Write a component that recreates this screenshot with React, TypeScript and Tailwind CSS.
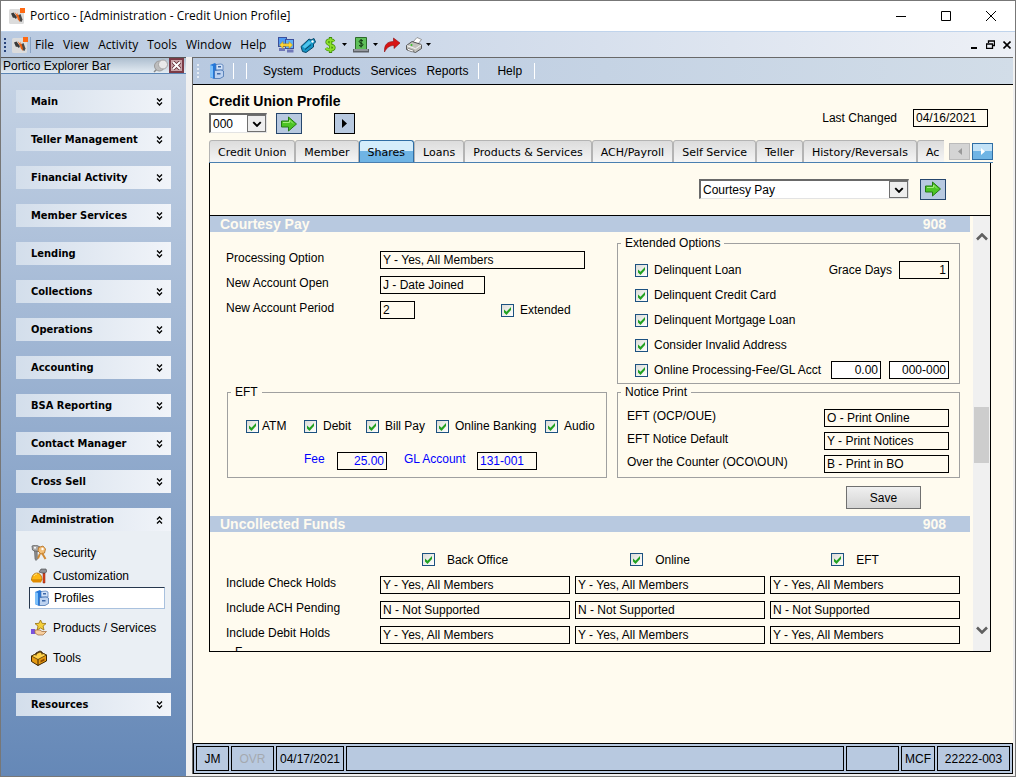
import { Fragment, useId, type ReactNode } from 'react';

const sections = [
  'Main',
  'Teller Management',
  'Financial Activity',
  'Member Services',
  'Lending',
  'Collections',
  'Operations',
  'Accounting',
  'BSA Reporting',
  'Contact Manager',
  'Cross Sell',
];

const tabs = [
  'Credit Union',
  'Member',
  'Shares',
  'Loans',
  'Products & Services',
  'ACH/Payroll',
  'Self Service',
  'Teller',
  'History/Reversals',
  'Ac',
];

const extendedOptions = [
  'Delinquent Loan',
  'Delinquent Credit Card',
  'Delinquent Mortgage Loan',
  'Consider Invalid Address',
];

const notices = [
  { label: 'EFT (OCP/OUE)', value: 'O - Print Online' },
  { label: 'EFT Notice Default', value: 'Y - Print Notices' },
  { label: 'Over the Counter (OCO\\OUN)', value: 'B - Print in BO' },
];

const holds = [
  { label: 'Include Check Holds', value: 'Y - Yes, All Members' },
  { label: 'Include ACH Pending', value: 'N - Not Supported' },
  { label: 'Include Debit Holds', value: 'Y - Yes, All Members' },
];

/* ---------- icons ---------- */

function PorticoLogo({ className = '' }: { className?: string }) {
  return (
    <svg viewBox="0 0 16 16" className={`size-4 shrink-0 ${className}`}>
      <rect y="1" width="15" height="15" rx="1.500" fill="#dcdcdc" />
      <path d="M2 5.500l2.500-1L8 9l-1 2-2-1.500-1 .5z" fill="#3a3a3a" />
      <path d="M9 7.500l2.500-1.500 2 5.500-1 2.500-2-1-1.500-2z" fill="#4a4a4a" />
      <path d="M5.500 4l3 3V4.500l2 5.500.500 4-2.500-3v-1z" fill="#f0600f" />
      <rect x="11" width="5" height="5" fill="#ff6a13" />
    </svg>
  );
}

function CabinetIcon() {
  return (
    <svg viewBox="0 0 16 16" className="size-4 shrink-0">
      <path d="M1 2l5-2 2 2v12l-3 2-4-2z" fill="#2477d8" />
      <path d="M1 2l3 1v12l-3-1z" fill="#7dc0fa" />
      <path d="M7 1.500L12 1l2 1v5H7z" fill="#d3e3f8" stroke="#4874b4" strokeWidth=".7" />
      <path d="M5.500 7.500L12 7l2.500 1v5.500L11 15.500H5.500z" fill="#bcd2f0" stroke="#3566a8" strokeWidth=".7" />
      <path d="M9 3h3v1.500H9zM8 10h3.500v1.500H8z" fill="#3d68a8" />
    </svg>
  );
}

function ComputersIcon() {
  return (
    <svg viewBox="0 0 16 16" className="size-4">
      <rect x="0.500" y="0.500" width="8" height="9" fill="#4f9af2" stroke="#3b4f9c" />
      <rect x="7.500" y="2.500" width="8" height="9" fill="#5fb0f8" stroke="#3b4f9c" />
      <path d="M1 11h6v3H1zM9 12.500h6.500v3H9z" fill="#7078b8" />
      <path d="M1.500 8l3.500-3.500v2.300h6V4.500L14.500 8 11 11.500V9.200H5v2.300z" fill="#ffd83a" stroke="#b48a00" strokeWidth=".5" />
    </svg>
  );
}

function TagIcon() {
  return (
    <svg viewBox="0 0 16 16" className="size-4">
      <path d="M1 9.500L9 2l2 1 3-1.500L15.500 5l-2 2v3l-7.500 5.500-3.500-1z" fill="#1593c4" stroke="#064668" />
      <path d="M2.500 9.500L9 3.800l2.500 2L5 11.500z" fill="#4fc4ec" />
      <circle cx="12.500" cy="4.500" r="1.200" fill="#fff" />
      <path d="M5 12.500l6-4.800" stroke="#064668" />
    </svg>
  );
}

function DollarIcon() {
  return (
    <svg viewBox="0 0 16 16" className="size-4">
      <path d="M12 4.500C10 2 5 2.500 5 5.200c0 3 7 2.300 7 5.300 0 3-6 3.300-8 .6M8.500 0v16" fill="none" stroke="#3c8a0a" strokeWidth="3.200" />
      <path d="M12 4.500C10 2 5 2.500 5 5.200c0 3 7 2.300 7 5.300 0 3-6 3.300-8 .6M8.500 1v14" fill="none" stroke="#8be02a" strokeWidth="1.800" />
    </svg>
  );
}

function CashIcon() {
  return (
    <svg viewBox="0 0 16 16" className="size-4">
      <path d="M2.500.5h11v12h-11z" fill="#5fc05a" stroke="#2c6b2a" />
      <path d="M0 12h16v3.500H0z" fill="#5c6066" />
      <path d="M1 13h14" stroke="#c9cdd4" />
      <path d="M10 4C9 2.800 6.200 3 6.200 4.600S10 6 10 7.700 7 9.500 6 8.300M8.100 2v8.500" fill="none" stroke="#0e2f0e" />
    </svg>
  );
}

function RedArrowIcon() {
  return (
    <svg viewBox="0 0 16 16" className="size-4">
      <path d="M.5 15C0 8 3 4.500 9.500 4.500V1L16 6l-6 5.500V8.500C6 8.500 3 10 .5 15z" fill="#d81414" stroke="#8d0d0d" strokeWidth=".6" />
    </svg>
  );
}

function PrinterIcon() {
  return (
    <svg viewBox="0 0 16 16" className="size-4">
      <path d="M7 5l4-4.500 4.500 2L12 7z" fill="#fff" stroke="#777" strokeWidth=".7" />
      <path d="M.5 8.500L6 4.500l9.500 3v4l-6 4-9-3z" fill="#c2c2bc" stroke="#3b3b3b" strokeWidth=".8" />
      <path d="M1 8.700l8.500 3 6-4" fill="none" stroke="#f6f6f6" />
      <path d="M2.500 11.500l5.500 2-1.500 1.500-5.500-2z" fill="#fff" stroke="#555" strokeWidth=".6" />
      <circle cx="5.500" cy="8" r="1" fill="#38c428" />
    </svg>
  );
}

function KeysIcon() {
  return (
    <svg viewBox="0 0 16 16" className="size-4">
      <path d="M1 1l4-1 4 2v4L5.500 7 1.500 5z" fill="#a9a9a9" stroke="#5e5e5e" strokeWidth=".8" />
      <path d="M3.500 6h2.500l.5 8-1.500 1.500L4 14z" fill="#8c8c8c" stroke="#555" strokeWidth=".6" />
      <circle cx="4" cy="2.800" r="1" fill="#fff" />
      <path d="M7.500 2.500L12 1l2.500 3-1 4-3.500 1-3-3z" fill="#f3bf78" stroke="#b06a1a" strokeWidth=".8" />
      <path d="M11 8l3.500 6M9 8.500l-2 5" stroke="#d08a34" strokeWidth="2" />
      <circle cx="11.500" cy="4" r="1.200" fill="#fff" />
    </svg>
  );
}

function HelmetIcon() {
  return (
    <svg viewBox="0 0 16 16" className="size-4">
      <path d="M.5 12c0-4 2.500-7 5.500-7s5 3 5 7z" fill="#fdb713" stroke="#a25f00" strokeWidth=".7" />
      <path d="M0 12h11l-1 2.500H2z" fill="#e08b00" />
      <path d="M3 8c.5-1.500 1.500-2 3-2" fill="none" stroke="#ffe88a" />
      <path d="M12 5h2v10h-2z" fill="#e2471f" stroke="#7c1d08" strokeWidth=".5" />
      <path d="M8 4l2-3h5l1 2.500-2 1.500h-3z" fill="#8d9096" stroke="#414141" strokeWidth=".6" />
    </svg>
  );
}

function StarHandIcon() {
  return (
    <svg viewBox="0 0 16 16" className="size-4">
      <path d="M9.500 0l1.600 3.300 3.900.3-2.900 2.500.9 3.900-3.500-2-3.400 2 .9-3.900L4 3.600l3.900-.3z" fill="#f4cf3a" stroke="#97700c" strokeWidth=".8" />
      <rect y="9" width="4" height="5" fill="#7a52dd" />
      <path d="M4 10h5l2 1.500h4.500L12 15H7l-3-2z" fill="#f7cf9f" stroke="#9c6431" strokeWidth=".7" />
    </svg>
  );
}

function ToolboxIcon() {
  return (
    <svg viewBox="0 0 16 16" className="size-4">
      <path d="M.5 6L9 2l6.500 3v6L7 15.500l-6.500-4z" fill="#e59a12" stroke="#3e2500" />
      <path d="M.5 6L9 2l6.500 3L7 9.500z" fill="#ffd24a" stroke="#3e2500" strokeWidth=".7" />
      <path d="M7 9.500v6" stroke="#3e2500" />
      <path d="M5 5.500V3l4-2 2 1v2.500" fill="none" stroke="#3e2500" />
      <path d="M9.500 10.500l4-2v2l-4 2z" fill="#8d4a00" />
    </svg>
  );
}

function GreenArrow() {
  return (
    <svg viewBox="0 0 16 16" className="size-4">
      <path d="M.5 5H7.500V1L15.500 8l-8 7v-4H.5z" fill="#4cc424" stroke="#257a14" />
      <path d="M2 6.500h6.500V4l3.500 3.500" fill="none" stroke="#a4ec7c" />
    </svg>
  );
}

function Caret() {
  return (
    <svg viewBox="0 0 5 3" className="h-[3px] w-[5px]">
      <path d="M0 0h5L2.500 3z" fill="#000" />
    </svg>
  );
}

function DoubleChevron({ up = false }: { up?: boolean }) {
  return (
    <svg viewBox="0 0 7 8" className={`h-2 w-[7px] ${up ? 'rotate-180' : ''}`}>
      <path d="M1 .5l2.500 2.500L6 .5M1 4.500L3.500 7 6 4.500" fill="none" stroke="#000" strokeWidth="1.300" />
    </svg>
  );
}

function Chevron({ className }: { className: string }) {
  return (
    <svg viewBox="0 0 12 8" className={className}>
      <path d="M1 1.500l5 5 5-5" fill="none" stroke="currentColor" strokeWidth="2.600" />
    </svg>
  );
}

/* ---------- form parts ---------- */

function Field({ id, value, label, className = '' }: { id?: string; value: string; label?: string; className?: string }) {
  return (
    <input
      id={id}
      aria-label={label}
      defaultValue={value}
      className={`h-[18px] min-w-0 border border-black px-0.5 leading-4 ${className}`}
    />
  );
}

function Check({ label, gap = 'gap-1.5' }: { label: string; gap?: string }) {
  return (
    <label className={`flex items-center whitespace-nowrap leading-4 ${gap}`}>
      <span className="grid shrink-0">
        <input
          type="checkbox"
          defaultChecked
          className="peer col-start-1 row-start-1 size-[13px] appearance-none border border-[#1c5180] bg-linear-to-br from-[#dcdcd7] to-white"
        />
        <svg viewBox="0 0 13 13" className="pointer-events-none col-start-1 row-start-1 size-[13px] opacity-0 peer-checked:opacity-100">
          <path d="M3 5.500v3L5.500 11 10 6V3L5.500 7.800z" fill="#21a121" />
        </svg>
      </span>
      {label}
    </label>
  );
}

function Dropdown({ value, label, className = '' }: { value: string; label: string; className?: string }) {
  return (
    <div className={`relative flex h-5 border border-t-2 border-l-2 border-[#e3e3e3] border-t-[#696969] border-l-[#696969] bg-white ${className}`}>
      <select aria-label={label} className="w-full appearance-none pl-0.5 leading-4">
        <option>{value}</option>
      </select>
      <span className="pointer-events-none absolute inset-y-0 right-0 flex w-[19px] items-center justify-center border border-[#707070] bg-[#eee]">
        <Chevron className="h-1.5 w-2.5" />
      </span>
    </div>
  );
}

function GoButton({ label }: { label: string }) {
  return (
    <button aria-label={label} className="flex h-[21px] w-[26px] items-center justify-center border border-[#26466d] bg-[#b8c9e0]">
      <GreenArrow />
    </button>
  );
}

function SectionBar({ title }: { title: string }) {
  return (
    <div className="mr-[3px] flex h-4 items-center justify-between bg-[#b8c9e0] pr-6 pl-2.5 text-sm font-bold text-[#fffbef]">
      <h2>{title}</h2>
      <span>908</span>
    </div>
  );
}

function Group({ title, className = '', children }: { title: string; className?: string; children?: ReactNode }) {
  return (
    <fieldset className={`border border-[#a0a0a0] ${className}`}>
      <legend className="ml-[3px] px-1 leading-4">{title}</legend>
      {children}
    </fieldset>
  );
}

/* ---------- window chrome ---------- */

function TitleBar() {
  return (
    <header className="flex h-[30px] shrink-0 items-center bg-white pr-0.5 pl-2 font-['Open_Sans',sans-serif] text-xs">
      <PorticoLogo />
      <h1 className="ml-[5px]">Portico - [Administration - Credit Union Profile]</h1>
      <div className="ml-auto flex">
        <button aria-label="Minimize" className="flex w-[45px] justify-center">
          <svg viewBox="0 0 10 10" className="size-2.5"><path d="M0 5.500h10" stroke="#000" /></svg>
        </button>
        <button aria-label="Maximize" className="flex w-[45px] justify-center">
          <svg viewBox="0 0 10 10" className="size-2.5"><path d="M.5.5h9v9h-9z" fill="none" stroke="#000" /></svg>
        </button>
        <button aria-label="Close" className="flex w-[45px] justify-center">
          <svg viewBox="0 0 10 10" className="size-2.5"><path d="M0 0l10 10M10 0L0 10" stroke="#000" /></svg>
        </button>
      </div>
    </header>
  );
}

function MenuBar() {
  return (
    <nav className="flex h-[26px] shrink-0 items-center border-t border-[#c0d4ec] bg-linear-to-r from-[#b8c9e0] to-[#edf0f6] pl-[3px] font-['Open_Sans',sans-serif] text-xs">
      <Grip />
      <PorticoLogo className="ml-1.5" />
      <span className="ml-0.5 h-4 border-l border-[#8aa3c4]" />
      <div className="ml-1 flex gap-[9px]">
        {['File', 'View', 'Activity', 'Tools', 'Window', 'Help'].map((item) => (
          <button key={item}>{item}</button>
        ))}
      </div>
      <div className="ml-3 flex items-center gap-1.5">
        <button aria-label="Network"><ComputersIcon /></button>
        <button aria-label="Tag"><TagIcon /></button>
        <button aria-label="Funds" className="flex items-center gap-1"><DollarIcon /><Caret /></button>
        <button aria-label="Cash" className="flex items-center gap-1"><CashIcon /><Caret /></button>
        <button aria-label="Forward"><RedArrowIcon /></button>
        <button aria-label="Print" className="flex items-center gap-1"><PrinterIcon /><Caret /></button>
      </div>
      <div className="ml-auto flex items-center gap-2 pr-1">
        <button aria-label="Minimize child window">
          <svg viewBox="0 0 8 8" className="size-2"><path d="M1 7h6" stroke="#000" strokeWidth="2" /></svg>
        </button>
        <button aria-label="Restore child window">
          <svg viewBox="0 0 9 9" className="size-[9px]"><path d="M2.500 3V1h6v4.500H6.500M.5 4h6v4.500h-6z" fill="none" stroke="#000" strokeWidth="1.300" /></svg>
        </button>
        <button aria-label="Close child window">
          <svg viewBox="0 0 8 8" className="size-2"><path d="M.5.5l7 7M7.500.5l-7 7" stroke="#000" strokeWidth="1.600" /></svg>
        </button>
      </div>
    </nav>
  );
}

function Grip({ className = 'text-[#27427a]' }: { className?: string }) {
  return (
    <svg viewBox="0 0 2 14" className={`h-3.5 w-0.5 ${className}`}>
      <path d="M1 0v14" stroke="currentColor" strokeWidth="2" strokeDasharray="2 2" />
    </svg>
  );
}

function ExplorerBar() {
  return (
    <aside className="flex w-[185px] shrink-0 flex-col bg-linear-to-b from-[#c8d5e6] to-[#6588b7]">
      <div className="flex h-[17px] shrink-0 items-center border-y border-t-[#555] border-b-[#5c86b5] bg-linear-to-b from-[#aebfd0] to-[#e4ecf3] pl-0.5">
        <h2>Portico Explorer Bar</h2>
        <button aria-label="Pin" className="ml-auto">
          <svg viewBox="0 0 16 14" className="h-3.5 w-4">
            <path d="M1 13l5-5" stroke="#888" strokeWidth="1.500" />
            <circle cx="6.500" cy="7" r="5" fill="#bdbdbd" stroke="#999" />
            <circle cx="10" cy="5.500" r="4.500" fill="#e9e9e9" stroke="#a5a5a5" />
          </svg>
        </button>
        <button aria-label="Close explorer bar" className="mr-0.5 flex size-[15px] items-center justify-center border-2 border-[#7c3b46] bg-[#c9a3a8]">
          <svg viewBox="0 0 9 9" className="size-[9px]">
            <path d="M1 1l7 7M8 1L1 8" stroke="#5c2730" strokeWidth="3.600" />
            <path d="M1 1l7 7M8 1L1 8" stroke="#fff" strokeWidth="2" />
          </svg>
        </button>
      </div>
      <div className="flex flex-col gap-[15px] px-[15px] pt-4">
        {sections.map((name) => (
          <SectionHeader key={name} name={name} />
        ))}
        <div className="bg-[#eaeff4]">
          <SectionHeader name="Administration" open />
          <ul className="flex flex-col pt-2.5 pr-1.5 pb-[9px] pl-[13px]">
            <NavItem icon={<KeysIcon />} label="Security" />
            <NavItem icon={<HelmetIcon />} label="Customization" />
            <li>
              <a href="#profiles" className="flex h-[22px] items-center gap-1 border border-[#a9c1de] border-t-[#26374d] border-l-[#26374d] bg-white pl-1">
                <CabinetIcon />
                Profiles
              </a>
            </li>
            <NavItem icon={<StarHandIcon />} label="Products / Services" tall />
            <NavItem icon={<ToolboxIcon />} label="Tools" tall />
          </ul>
        </div>
        <SectionHeader name="Resources" />
      </div>
    </aside>
  );
}

function SectionHeader({ name, open = false }: { name: string; open?: boolean }) {
  return (
    <button className="flex h-[23px] w-full items-center justify-between bg-linear-to-r from-[#d3deeb] to-[#f1f4f9] pr-2 pl-[15px] font-['DejaVu_Sans_Condensed','DejaVu_Sans',sans-serif] text-[11px] font-bold">
      <span className="pt-0.5">{name}</span>
      <DoubleChevron up={open} />
    </button>
  );
}

function NavItem({ icon, label, tall = false }: { icon: ReactNode; label: string; tall?: boolean }) {
  return (
    <li className={`flex items-center ${tall ? 'h-[30px] pt-2' : 'h-[23px]'}`}>
      <a href="#nav" className="ml-0.5 flex items-center gap-1.5 whitespace-nowrap">
        {icon}
        {label}
      </a>
    </li>
  );
}

function Toolbar() {
  return (
    <nav className="flex h-[27px] shrink-0 items-center border-b border-black bg-linear-to-r from-[#b8c9e0] to-[#d2dde8] pl-1">
      <Grip className="text-[#e6edf5]" />
      <button aria-label="Profiles" className="ml-2.5"><CabinetIcon /></button>
      <span className="ml-2 h-4 border-l border-white" />
      <span className="ml-3 h-4 border-l border-white" />
      <div className="ml-4 flex gap-2.5">
        {['System', 'Products', 'Services', 'Reports'].map((item) => (
          <button key={item}>{item}</button>
        ))}
      </div>
      <span className="ml-2.5 h-4 border-l border-white" />
      <button className="ml-[18px]">Help</button>
      <span className="ml-3 h-4 border-l border-white" />
    </nav>
  );
}

function TabStrip() {
  return (
    <div className="-mr-0.5 flex h-[23px] items-end border-b border-[#4a7fb0] font-['DejaVu_Sans',Verdana,sans-serif] text-[11px]">
      <div role="tablist" className="flex min-w-0 flex-1 overflow-hidden">
        {tabs.map((tab) => (
          <button
            key={tab}
            role="tab"
            aria-selected={tab === 'Shares'}
            className="h-[22px] shrink-0 rounded-t-[3px] border border-b-0 border-[#b4b4b4] bg-linear-to-b from-[#dcdcdc] to-[#f5f5f5] px-2 pt-1 whitespace-nowrap aria-selected:border-[#2f6ea5] aria-selected:from-[#d4edfb] aria-selected:from-50% aria-selected:to-[#6fb4e4] aria-selected:to-50%"
          >
            {tab}
          </button>
        ))}
      </div>
      <div className="mb-0.5 ml-[5px] flex gap-0.5">
        <button aria-label="Previous tabs" className="flex h-[17px] w-[21px] items-center justify-center border border-[#bbb] bg-[#d4d4d4]">
          <svg viewBox="0 0 4 7" className="h-[7px] w-1"><path d="M4 0v7L0 3.500z" fill="#999" /></svg>
        </button>
        <button aria-label="Next tabs" className="flex h-[17px] w-[21px] items-center justify-center border border-[#2f6ea5] bg-linear-to-b from-[#c2e2f7] from-50% to-[#6fb4e4] to-50%">
          <svg viewBox="0 0 4 7" className="h-[7px] w-1"><path d="M0 0v7l4-3.500z" fill="#fff" /></svg>
        </button>
      </div>
    </div>
  );
}

/* ---------- form sections ---------- */

function CourtesyPay() {
  const id = useId();

  return (
    <section>
      <SectionBar title="Courtesy Pay" />
      <div className="flex gap-2.5 pr-[13px] pl-4">
        <div className="flex flex-1 flex-col pt-[19px]">
          <div className="grid grid-cols-[154px_1fr] items-start gap-y-[7px] leading-[14px]">
            <label htmlFor={`${id}-option`}>Processing Option</label>
            <Field id={`${id}-option`} value="Y - Yes, All Members" className="w-[205px]" />
            <label htmlFor={`${id}-open`}>New Account Open</label>
            <Field id={`${id}-open`} value="J - Date Joined" className="w-[105px]" />
            <label htmlFor={`${id}-period`}>New Account Period</label>
            <div className="flex items-center gap-[86px]">
              <Field id={`${id}-period`} value="2" className="w-[35px]" />
              <Check label="Extended" />
            </div>
          </div>

          <Group title="EFT" className="mt-auto ml-px h-[94px]">
            <div className="mt-[18px] grid grid-cols-[58px_62px_70px_109px_1fr] pl-[18px]">
              <Check label="ATM" gap="gap-[3px]" />
              <Check label="Debit" />
              <Check label="Bill Pay" />
              <Check label="Online Banking" />
              <Check label="Audio" />
            </div>
            <div className="mt-[18px] flex items-start pl-[76px] leading-[14px] text-[#0000ff]">
              <label htmlFor={`${id}-fee`} className="w-[33px]">Fee</label>
              <Field id={`${id}-fee`} value="25.00" className="mr-[17px] w-[50px] text-right" />
              <label htmlFor={`${id}-gl`} className="w-[73px]">GL Account</label>
              <Field id={`${id}-gl`} value="131-001" className="w-[60px]" />
            </div>
          </Group>
        </div>

        <div className="w-[343px] pt-[3px]">
          <Group title="Extended Options" className="h-[149px]">
            <div className="mt-[11px] flex flex-col gap-[9px] pr-2.5 pl-[17px]">
              {extendedOptions.map((option, i) => (
                <div key={option} className="flex h-4 items-center justify-between">
                  <Check label={option} />
                  {i === 0 && (
                    <div className="flex items-center gap-[7px]">
                      <label htmlFor={`${id}-grace`}>Grace Days</label>
                      <Field id={`${id}-grace`} value="1" className="w-[50px] text-right" />
                    </div>
                  )}
                </div>
              ))}
              <div className="flex h-4 items-center gap-2">
                <Check label="Online Processing-Fee/GL Acct" />
                <Field label="Online processing fee" value="0.00" className="ml-auto w-[50px] bg-white text-right" />
                <Field label="Online processing GL account" value="000-000" className="w-[60px] bg-white text-right" />
              </div>
            </div>
          </Group>

          <Group title="Notice Print" className="h-[94px]">
            <div className="mt-[9px] flex flex-col gap-[5px] pr-2.5 pl-[9px]">
              {notices.map((notice, i) => (
                <div key={notice.label} className="flex items-start justify-between leading-[14px]">
                  <label htmlFor={`${id}-notice-${i}`}>{notice.label}</label>
                  <Field id={`${id}-notice-${i}`} value={notice.value} className="w-[125px]" />
                </div>
              ))}
            </div>
          </Group>
        </div>
      </div>
      <div className="flex justify-end pt-2 pr-[52px] pb-[7px]">
        <button className="h-[23px] w-[75px] border border-[#707070] bg-linear-to-b from-[#f0f0f0] to-[#d4d4d4]">Save</button>
      </div>
    </section>
  );
}

function UncollectedFunds() {
  return (
    <section>
      <SectionBar title="Uncollected Funds" />
      <div className="grid grid-cols-[149px_1fr_1fr_1fr] items-start gap-x-[5px] gap-y-[7px] pt-[18px] pr-[13px] pl-4 leading-[14px]">
        <span />
        {['Back Office', 'Online', 'EFT'].map((channel) => (
          <div key={channel} className="flex h-[19px] items-center justify-center pr-5">
            <Check label={channel} gap="gap-3" />
          </div>
        ))}
        {holds.map((row) => (
          <Fragment key={row.label}>
            <span>{row.label}</span>
            <Field label={`${row.label}, Back Office`} value={row.value} />
            <Field label={`${row.label}, Online`} value={row.value} />
            <Field label={`${row.label}, EFT`} value={row.value} />
          </Fragment>
        ))}
      </div>
      <Group title="F" className="mr-[13px] ml-[17px] h-20" />
    </section>
  );
}

function StatusBar() {
  return (
    <footer className="flex h-[31px] shrink-0 gap-0.5 border border-black bg-[#b8c9e0] p-0.5">
      <span className="flex w-[33px] items-center justify-center border border-black">JM</span>
      <span className="flex w-[43px] items-center justify-center border border-black text-[#a5a9b0]">OVR</span>
      <span className="flex w-[68px] items-center justify-center border border-black">04/17/2021</span>
      <span className="flex-1 border border-black" />
      <span className="w-[53px] border border-black" />
      <span className="flex w-[34px] items-center justify-center border border-black">MCF</span>
      <span className="flex w-[73px] items-center justify-center border border-black">22222-003</span>
    </footer>
  );
}

export default function App() {
  return (
    <div className="flex h-screen flex-col border border-[#777] bg-[#f0f0f0] font-['Liberation_Sans',Arial,sans-serif] text-xs text-black">
      <TitleBar />
      <MenuBar />
      <div className="flex min-h-0 flex-1">
        <ExplorerBar />
        <main className="mr-0.5 mb-0.5 ml-1.5 flex min-w-0 flex-1 flex-col border-t border-l border-[#696969] bg-[#fffbef]">
          <Toolbar />
          <div className="flex min-h-0 flex-1 flex-col pt-2 pr-[22px] pb-[91px] pl-4">
            <div className="flex justify-between">
              <div>
                <h2 className="text-sm leading-4 font-bold">Credit Union Profile</h2>
                <div className="mt-1 flex">
                  <Dropdown label="Profile number" value="000" className="w-[58px]" />
                  <span className="ml-[9px]"><GoButton label="Load profile" /></span>
                  <button aria-label="Next profile" className="ml-8 flex h-[21px] w-[21px] items-center justify-center border border-black bg-[#b8c9e0]">
                    <svg viewBox="0 0 5 9" className="h-[9px] w-[5px]"><path d="M0 0v9l5-4.500z" fill="#000" /></svg>
                  </button>
                </div>
              </div>
              <label className="mt-4 mr-[3px] flex h-[18px] items-center gap-4">
                Last Changed
                <Field value="04/16/2021" className="w-[75px]" />
              </label>
            </div>

            <div className="mt-1.5">
              <TabStrip />
            </div>
            <div className="flex min-h-0 flex-1 flex-col border border-t-0 border-black">
              <div className="flex h-[53px] shrink-0 items-center justify-end gap-[11px] border-b border-black pr-11">
                <Dropdown label="Share section" value="Courtesy Pay" className="w-[210px]" />
                <GoButton label="Go to section" />
              </div>
              <div className="flex min-h-0 flex-1">
                <div className="min-w-0 flex-1 overflow-hidden">
                  <CourtesyPay />
                  <UncollectedFunds />
                </div>
                <div className="flex w-[17px] shrink-0 flex-col items-center bg-[#f0f0f0] pt-[17px] pb-[17px] text-[#606060]">
                  <Chevron className="h-2 w-3 rotate-180" />
                  <div className="mt-[166px] h-14 w-[15px] bg-[#cdcdcd]" />
                  <Chevron className="mt-auto h-2 w-3" />
                </div>
              </div>
            </div>
          </div>
          <StatusBar />
        </main>
      </div>
    </div>
  );
}
